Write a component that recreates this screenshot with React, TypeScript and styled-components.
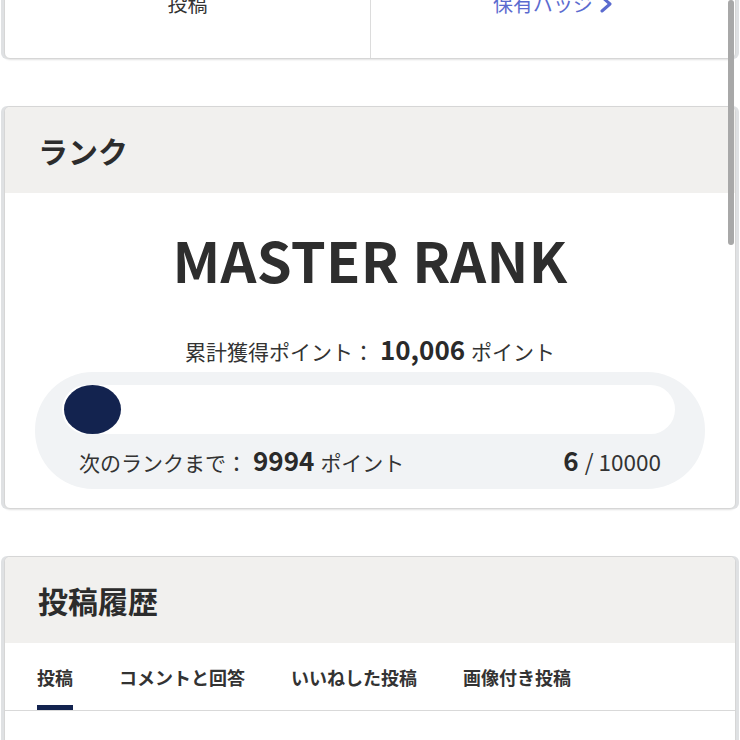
import React from 'react';
import styled, { createGlobalStyle } from 'styled-components';

const GlobalStyle = createGlobalStyle`
  html, body {
    margin: 0;
    padding: 0;
    background: #fff;
    font-family: 'Noto Sans CJK JP', 'Noto Sans', sans-serif;
    color: #333;
  }
`;

const Viewport = styled.div`
  position: relative;
  height: 740px;
  overflow: hidden;
`;

const Page = styled.div`
  margin-top: -75px; /* page is scrolled down a bit */
  padding: 0 4px 0 4px;
  display: flex;
  flex-direction: column;
  gap: 47px;
`;

const Card = styled.section`
  background: #fff;
  border: 1px solid #d6d6d6;
  border-radius: 6px;
  box-shadow: -3px 0 0 #dfe1e3, 3px 0 0 #dfe1e3, 0 1px 2px rgba(0, 0, 0, 0.12);
  overflow: hidden;
`;

const StatsRow = styled.div`
  display: grid;
  grid-template-columns: 1fr 1fr;
`;

const StatCell = styled.div`
  display: flex;
  flex-direction: column;
  align-items: center;
  gap: 4px;
  padding: 24px 0 40px;

  & + & {
    border-left: 1px solid #dcdcdc;
  }
`;

const StatValue = styled.span`
  font-size: 28px;
  font-weight: 700;
  line-height: 36px;
`;

const StatLabel = styled.span`
  font-size: 20px;
  line-height: 28px;
  color: #333;
`;

const BadgeLink = styled.a`
  display: flex;
  align-items: center;
  gap: 6px;
  font-size: 20px;
  line-height: 28px;
  color: #5b6bcf;
  text-decoration: none;
`;

const CardHeader = styled.div`
  height: 86px;
  display: flex;
  align-items: center;
  padding: 0 33px;
  background: #f1f0ee;
`;

const CardTitle = styled.h2`
  margin: 0;
  font-size: 30px;
  font-weight: 700;
  color: #2c2c2c;
`;

const RankBody = styled.div`
  display: flex;
  flex-direction: column;
  align-items: center;
  padding: 30px 30px 19px;
`;

const RankName = styled.div`
  font-size: 56px;
  font-weight: 700;
  line-height: 72px;
  color: #2e2e2e;
  letter-spacing: 0.3px;
`;

const PointsLine = styled.div`
  margin-top: 39px;
  font-size: 21px;
  line-height: 30px;
  display: flex;
  align-items: baseline;
  gap: 6px;
`;

const BigNum = styled.span`
  font-size: 26px;
  font-weight: 700;
  color: #2a2a2a;
`;

const ProgressPill = styled.div`
  align-self: stretch;
  margin-top: 6px;
  background: #f1f3f5;
  border-radius: 58px;
  padding: 13px 30px 10px 27px;
  display: flex;
  flex-direction: column;
`;

const Track = styled.div`
  height: 49px;
  background: #fff;
  border-radius: 25px;
  display: flex;
`;

const Fill = styled.div`
  height: 49px;
  margin-left: 2px;
  background: #13234f;
  border-radius: 50%;
`;

const ProgressInfo = styled.div`
  display: flex;
  justify-content: space-between;
  align-items: baseline;
  padding: 9px 14px 0 17px;
  font-size: 21px;
  line-height: 33px;
`;

const InfoGroup = styled.div`
  display: flex;
  align-items: baseline;
  gap: 6px;
`;

const GoalText = styled.span`
  font-size: 22.5px;
`;

const TabList = styled.div`
  display: flex;
  gap: 46px;
  padding: 0 32px;
  border-bottom: 1px solid #d9d9d9;
`;

const Tab = styled.div<{ $active?: boolean }>`
  padding: 21px 0 15px;
  font-size: 18px;
  font-weight: 700;
  line-height: 26px;
  color: #333;
  border-bottom: 5px solid ${(p) => (p.$active ? '#13234f' : 'transparent')};
`;

const Scrollbar = styled.div`
  position: absolute;
  top: 0;
  right: 6px;
  width: 6px;
  height: 245px;
  border-radius: 3px;
  background: #a8a8a8;
`;

const Chevron = () => (
  <svg width="14" height="18" viewBox="0 0 14 18" fill="none">
    <path d="M3 2l8 7-8 7" stroke="#5b6bcf" strokeWidth="3" strokeLinecap="round" strokeLinejoin="round" />
  </svg>
);

export default function App() {
  const current = 6;
  const goal = 10000;
  const total = 10006;
  const pct = (current / goal) * 100;

  return (
    <Viewport>
      <GlobalStyle />
      <Page>
        <Card>
          <StatsRow>
            <StatCell>
              <StatValue>24</StatValue>
              <StatLabel>投稿</StatLabel>
            </StatCell>
            <StatCell>
              <StatValue>3</StatValue>
              <BadgeLink href="#">
                保有バッジ
                <Chevron />
              </BadgeLink>
            </StatCell>
          </StatsRow>
        </Card>

        <Card>
          <CardHeader>
            <CardTitle>ランク</CardTitle>
          </CardHeader>
          <RankBody>
            <RankName>MASTER RANK</RankName>
            <PointsLine>
              <span>累計獲得ポイント：</span>
              <BigNum>{total.toLocaleString('en-US')}</BigNum>
              <span>ポイント</span>
            </PointsLine>
            <ProgressPill>
              <Track>
                <Fill style={{ width: `max(57px, ${pct}%)` }} />
              </Track>
              <ProgressInfo>
                <InfoGroup>
                  <span>次のランクまで：</span>
                  <BigNum>{goal - current}</BigNum>
                  <span>ポイント</span>
                </InfoGroup>
                <InfoGroup>
                  <BigNum>{current}</BigNum>
                  <GoalText>/ {goal}</GoalText>
                </InfoGroup>
              </ProgressInfo>
            </ProgressPill>
          </RankBody>
        </Card>

        <Card>
          <CardHeader>
            <CardTitle>投稿履歴</CardTitle>
          </CardHeader>
          <TabList>
            <Tab $active>投稿</Tab>
            <Tab>コメントと回答</Tab>
            <Tab>いいねした投稿</Tab>
            <Tab>画像付き投稿</Tab>
          </TabList>
          <div style={{ height: 200 }} />
        </Card>
      </Page>
      <Scrollbar />
    </Viewport>
  );
}
